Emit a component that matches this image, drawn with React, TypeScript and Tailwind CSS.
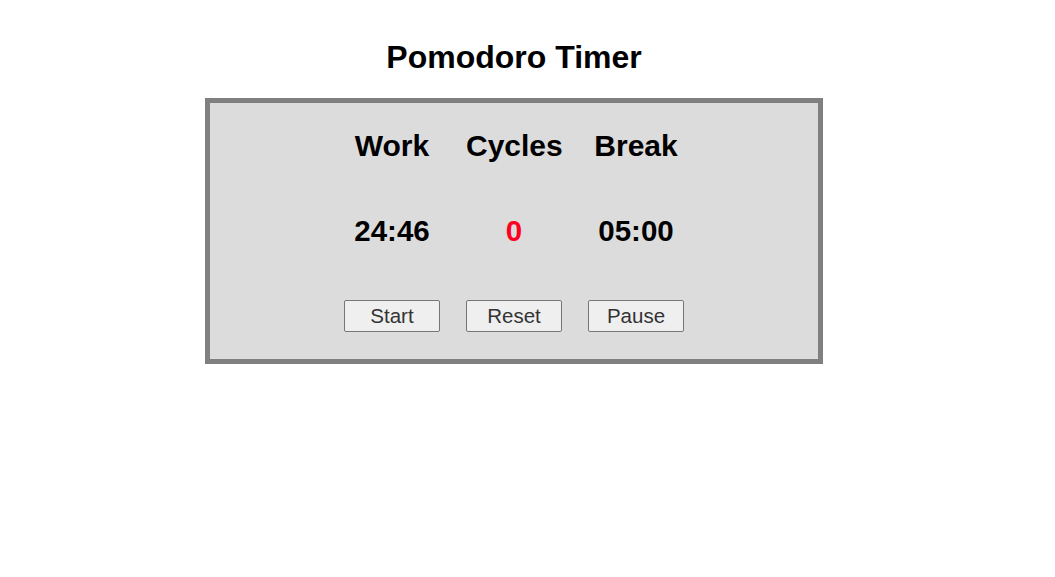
import React, { useState } from "react";

const columns = [
  { id: "work", label: "Work" },
  { id: "cycles", label: "Cycles" },
  { id: "break", label: "Break" },
];

const App = () => {
  const [work] = useState("24:46");
  const [cycles] = useState(0);
  const [rest] = useState("05:00");

  const values: { [key: string]: string | number } = {
    work,
    cycles,
    break: rest,
  };

  return (
    <div className="w-[1028px] min-h-[577px] bg-white flex flex-col items-center font-['Liberation_Sans',Arial,sans-serif] text-black">
      <h1 className="mt-[39px] text-[32px] leading-[37px] font-bold">
        Pomodoro Timer
      </h1>
      <div className="mt-[22px] w-[618px] h-[266px] border-[5px] border-[#808080] bg-[#dcdcdc] flex flex-col items-center pt-[26px]">
        <div className="grid grid-cols-[96px_96px_96px] gap-x-[26px]">
          {columns.map((col) => (
            <div
              key={col.id}
              className="text-center text-[30px] leading-[34px] font-bold"
            >
              {col.label}
            </div>
          ))}
        </div>
        <div className="mt-[51px] grid grid-cols-[96px_96px_96px] gap-x-[26px]">
          {columns.map((col) => (
            <div
              key={col.id}
              className={`text-center text-[29.5px] leading-[34px] font-bold ${
                col.id === "cycles" ? "text-[#ff0022]" : "text-black"
              }`}
            >
              {values[col.id]}
            </div>
          ))}
        </div>
        <div className="mt-[52px] grid grid-cols-[96px_96px_96px] gap-x-[26px]">
          {["Start", "Reset", "Pause"].map((label) => (
            <button
              key={label}
              className="h-[32px] bg-[#efefef] border border-[#767676] rounded-[2px] text-[20.5px] leading-[24px] text-[#333]"
            >
              {label}
            </button>
          ))}
        </div>
      </div>
    </div>
  );
};

export default App;
